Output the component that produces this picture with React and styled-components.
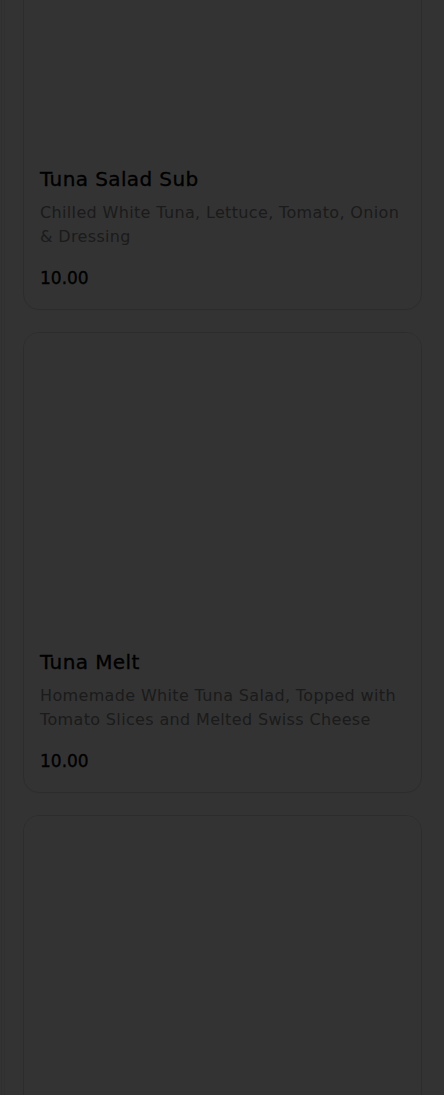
import React from "react";
import styled, { createGlobalStyle } from "styled-components";

const GlobalStyle = createGlobalStyle`
  html, body {
    margin: 0;
    padding: 0;
    background: #fff;
    overflow: hidden;
  }
  body {
    font-family: "DejaVu Sans", "Noto Sans", sans-serif;
    color: #000;
  }
`;

const PageSt = styled.div`
  height: 1095px;
  overflow: hidden;
  margin-left: 1px;
  border-left: 1px solid #ececec;
  padding-left: 2px;
`;

const MenuListSt = styled.ul`
  list-style: none;
  margin: -151px 0 0;
  padding: 0 22px 0 18px;
  border-left: 1px solid #ededed;
  display: flex;
  flex-direction: column;
  gap: 22px;
`;

const CardSt = styled.li`
  background: #fff;
  border: 1px solid #dcdcdc;
  border-radius: 16px;
  box-shadow: 0 1px 3px rgba(0, 0, 0, 0.04);
  overflow: hidden;
  height: 461px;
  box-sizing: border-box;
  display: flex;
  flex-direction: column;
`;

const PhotoSt = styled.div`
  height: 300px;
  flex-shrink: 0;
  background: #fff;
`;

const BodySt = styled.div`
  padding: 15px 16px 20px;
`;

const TitleSt = styled.h3`
  margin: 0;
  font-size: 20px;
  line-height: 28px;
  font-weight: 400;
  letter-spacing: 0.4px;
  -webkit-text-stroke: 0.35px #000;
`;

const DescSt = styled.p`
  margin: 8px 0 0;
  font-size: 16px;
  line-height: 24px;
  color: #858585;
  letter-spacing: 0.35px;
`;

const PriceSt = styled.div`
  margin-top: 17px;
  font-size: 17px;
  line-height: 24px;
  font-weight: 400;
  -webkit-text-stroke: 0.35px #000;
`;

const BackdropSt = styled.div`
  position: fixed;
  inset: 0;
  background: rgba(0, 0, 0, 0.8);
`;

const items = [
  {
    name: "Tuna Salad Sub",
    desc: "Chilled White Tuna, Lettuce, Tomato, Onion & Dressing",
    price: "10.00",
  },
  {
    name: "Tuna Melt",
    desc: "Homemade White Tuna Salad, Topped with Tomato Slices and Melted Swiss Cheese",
    price: "10.00",
  },
];

const MenuCard = ({ item }) => (
  <CardSt>
    <PhotoSt />
    {item && (
      <BodySt>
        <TitleSt>{item.name}</TitleSt>
        <DescSt>{item.desc}</DescSt>
        <PriceSt>{item.price}</PriceSt>
      </BodySt>
    )}
  </CardSt>
);

export default function App() {
  return (
    <>
      <GlobalStyle />
      <PageSt>
        <MenuListSt>
          {items.map((item) => (
            <MenuCard key={item.name} item={item} />
          ))}
          <MenuCard />
        </MenuListSt>
      </PageSt>
      <BackdropSt />
    </>
  );
}
